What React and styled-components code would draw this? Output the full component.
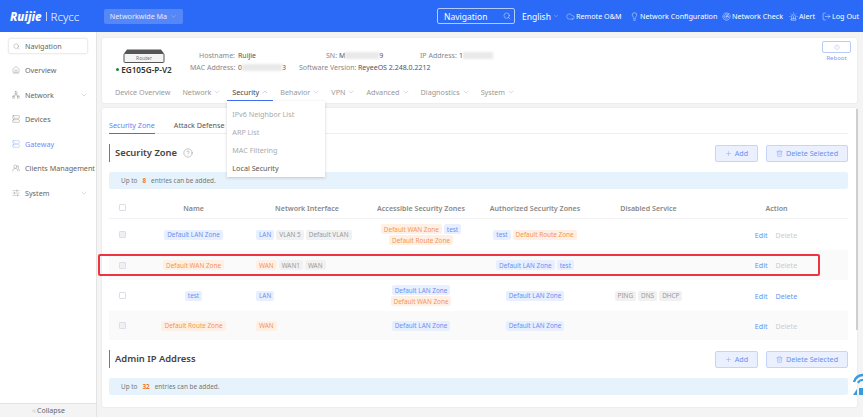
import React from "react";
import styled, { createGlobalStyle } from "styled-components";
import {
  Search, ChevronDown, ChevronUp, ChevronsLeft, Cloud, Lightbulb, Radar, Siren, LogOut,
  House, Network, Server, UsersRound, SlidersHorizontal, CircleHelp, Plus, Trash2, Power,
} from "lucide-react";

const GlobalStyle = createGlobalStyle`
  html, body { margin: 0; padding: 0; height: 100%; overflow: hidden; }
  body { font-family: "Noto Sans", "Open Sans", sans-serif; font-size: 7px; color: #666; background: #f4f4f5; }
  * { box-sizing: border-box; }
`;

const Page = styled.div`
  width: 863px;
  height: 417px;
  display: flex;
  flex-direction: column;
  overflow: hidden;
  position: relative;
`;

// Header
const Header = styled.header`
  height: 32px;
  flex: none;
  background: #2b6af6;
  color: #fff;
  display: flex;
  align-items: center;
  padding: 0 0 0 10px;
`;
const Logo = styled.div`
  width: 94px;
  display: flex;
  align-items: center;
  gap: 4px;
  font-size: 11.5px;
  b { font-style: italic; font-weight: 800; }
  i { width: 1px; height: 9px; background: #c8d8ff; }
  span { font-weight: 300; }
`;
const Selector = styled.div`
  width: 79px;
  height: 15px;
  display: flex;
  align-items: center;
  justify-content: center;
  gap: 3px;
  font-size: 7.2px;
  border-radius: 2px;
  background: rgba(255, 255, 255, 0.2);
  color: #e4ecff;
`;
const SearchBox = styled.div`
  margin-left: 254px;
  width: 78px;
  height: 16px;
  display: flex;
  align-items: center;
  justify-content: space-between;
  padding: 0 3px 0 6px;
  font-size: 8.5px;
  border: 1px solid #b4cbff;
  border-radius: 2px;
`;
const Lang = styled.div`
  width: 44px;
  margin-left: 7px;
  display: flex;
  align-items: center;
  gap: 2px;
  font-size: 8.5px;
`;
const HeadLink = styled.div`
  width: ${(p) => p.$w}px;
  flex: none;
  display: flex;
  align-items: center;
  gap: 1px;
  font-size: 7.2px;
  white-space: nowrap;
  svg { flex: none; }
`;

const Body = styled.div`
  flex: 1;
  display: flex;
  min-height: 0;
`;

// Sidebar
const Sidebar = styled.aside`
  width: 97px;
  flex: none;
  background: #fff;
  border-right: 1px solid #e4e4e4;
  display: flex;
  flex-direction: column;
  padding-top: 6px;
`;
const NavList = styled.nav`
  flex: 1;
  display: flex;
  flex-direction: column;
  padding: 0 8px;
`;
const NavItem = styled.div`
  height: ${(p) => (p.$boxed ? "16px" : "24.5px")};
  margin-bottom: ${(p) => (p.$boxed ? "4px" : "0")};
  display: flex;
  align-items: center;
  gap: 5px;
  padding-left: 4px;
  font-size: 7.2px;
  white-space: nowrap;
  color: ${(p) => (p.$active ? "#6d8ff5" : "#666")};
  border-radius: 2px;
  ${(p) => p.$boxed && "border: 1px solid #ececec; box-shadow: 0 0 2px rgba(0,0,0,.08);"}
  svg { flex: none; }
  svg:last-child:not(:first-child) { margin-left: auto; margin-right: 0; color: #999; }
`;
const CollapseBar = styled.div`
  height: 14px;
  display: flex;
  align-items: center;
  justify-content: center;
  background: #f4f4f5;
  border-top: 1px solid #e4e4e4;
  font-size: 7px;
`;

// Content
const Content = styled.main`
  flex: 1;
  padding: 6px 6px 10px 5px;
  display: flex;
  flex-direction: column;
  gap: 5px;
  min-width: 0;
`;
const DeviceCard = styled.section`
  height: 65px;
  flex: none;
  background: #fff;
  border-radius: 2px;
  box-shadow: 0 0 2px rgba(0, 0, 0, 0.1);
  position: relative;
  z-index: 2;
  display: flex;
  flex-direction: column;
`;
const DeviceTop = styled.div`
  flex: 1;
  display: flex;
`;
const DeviceBox = styled.div`
  width: 84px;
  padding-top: 11px;
  display: flex;
  flex-direction: column;
  align-items: center;
`;
const Model = styled.div`
  margin-top: 1px;
  display: flex;
  align-items: center;
  gap: 2px;
  font-size: 8.2px;
  font-weight: 600;
  color: #333;
  white-space: nowrap;
`;
const Dot = styled.span`
  width: 3px;
  height: 3px;
  border-radius: 50%;
  background: #0a8f3c;
`;
const InfoGrid = styled.div`
  margin-left: 4px;
  padding-top: 13px;
  display: flex;
  flex-direction: column;
  gap: 3px;
`;
const InfoRow = styled.div`
  display: flex;
  height: 9px;
  align-items: center;
`;
const Field = styled.div`
  width: ${(p) => p.$w}px;
  flex: none;
  display: flex;
  white-space: nowrap;
  font-size: 7px;
  span { width: ${(p) => p.$label}px; flex: none; text-align: right; color: #888; margin-right: 3px; }
  em { font-style: normal; color: #555; display: flex; align-items: center; }
`;
const Redact = styled.i`
  display: inline-block;
  width: ${(p) => p.$w}px;
  height: 7px;
  background: #e9e9e9;
  filter: blur(1px);
`;
const Reboot = styled.div`
  position: absolute;
  right: 6px;
  top: 3px;
  display: flex;
  flex-direction: column;
  align-items: center;
  font-size: 6px;
  color: #7d9bf0;
  div {
    width: 29px;
    height: 12px;
    border: 1px solid #b8caf7;
    border-radius: 2px;
    display: flex;
    align-items: center;
    justify-content: center;
    margin-bottom: 1px;
  }
`;
const DeviceTabs = styled.div`
  height: 20px;
  flex: none;
  display: flex;
  padding-left: 8px;
  gap: 2px;
`;
const DeviceTab = styled.div`
  position: relative;
  height: 18px;
  padding: 0 5px;
  display: flex;
  align-items: center;
  gap: 2px;
  font-size: 7.2px;
  white-space: nowrap;
  color: ${(p) => (p.$active ? "#444" : "#999")};
  border-bottom: 1px solid ${(p) => (p.$active ? "#3f73f5" : "transparent")};
  > svg { margin-right: -1px; }
`;
const Dropdown = styled.div`
  position: absolute;
  left: 0;
  top: 18px;
  width: 98px;
  height: 76px;
  padding: 4px 5px 0;
  background: #fff;
  box-shadow: 0 1px 3px rgba(0, 0, 0, 0.18);
  display: flex;
  flex-direction: column;
  z-index: 5;
`;
const DropItem = styled.div`
  height: 18px;
  flex: none;
  display: flex;
  align-items: center;
  color: ${(p) => (p.$on ? "#555" : "#aaa")};
  font-size: 7.2px;
`;

const MainCard = styled.section`
  flex: 1;
  width: 755px;
  background: #fff;
  border-radius: 2px;
  box-shadow: 0 0 2px rgba(0, 0, 0, 0.1);
  padding: 8px 9px 0 7px;
  display: flex;
  flex-direction: column;
  position: relative;
`;
const SubTabs = styled.div`
  height: 18px;
  flex: none;
  display: flex;
  gap: 19px;
  border-bottom: 1px solid #eceef4;
`;
const SubTab = styled.div`
  height: 18px;
  display: flex;
  align-items: center;
  font-size: 7.2px;
  color: ${(p) => (p.$active ? "#5d86f3" : "#555")};
  border-bottom: 1px solid ${(p) => (p.$active ? "#3f73f5" : "transparent")};
`;
const SectionHead = styled.div`
  height: 18px;
  flex: none;
  margin-top: ${(p) => p.$top}px;
  display: flex;
  align-items: center;
  gap: 6px;
  padding-left: 5px;
  border-left: 1.5px solid #4a78f0;
  font-size: 9.4px;
  line-height: 16px;
  font-weight: 600;
  color: #444;
  > svg { color: #777; }
`;
const HeadButtons = styled.div`
  margin-left: auto;
  display: flex;
  gap: 8px;
`;
const Button = styled.div`
  width: ${(p) => p.$w}px;
  height: 17px;
  display: flex;
  align-items: center;
  justify-content: center;
  gap: 3px;
  font-size: 7.2px;
  font-weight: 400;
  color: #6a8ff0;
  background: #eaf0fe;
  border: 1px solid #c5d5fa;
  border-radius: 2px;
`;
const Note = styled.div`
  height: 17px;
  flex: none;
  margin-top: 10px;
  padding-left: 12px;
  display: flex;
  align-items: center;
  gap: 4px;
  font-size: 6.4px;
  background: #e6f3fd;
  border-radius: 2px;
  color: #777;
  b { color: #ee7a26; padding: 0 1px; }
`;

// Table
const cols = "28px 113px 114px 114px 114px 113px 143px";
const Table = styled.div`
  margin-top: 8px;
  display: flex;
  flex-direction: column;
  flex: none;
`;
const HeadRow = styled.div`
  height: 22px;
  display: grid;
  grid-template-columns: ${cols};
  align-items: center;
  border-bottom: 1px solid #f2f2f4;
  font-size: 7.1px;
  font-weight: 600;
  color: #888;
`;
const Row = styled.div`
  height: ${(p) => p.$h}px;
  display: grid;
  grid-template-columns: ${cols};
  align-items: center;
  background: ${(p) => (p.$shade ? "#fafafa" : "#fff")};
`;
const Cell = styled.div`
  display: flex;
  flex-wrap: wrap;
  align-items: center;
  justify-content: ${(p) => (p.$left ? "flex-start" : "center")};
  gap: 1px 2px;
  padding-left: ${(p) => (p.$left ? "6px" : "0")};
`;
const Check = styled.span`
  width: 7px;
  height: 7px;
  margin-left: 10px;
  border-radius: 1px;
  border: 1px solid #dcdfe6;
  background: ${(p) => (p.$off ? "#eef0f6" : "#fff")};
`;
const tagColors = {
  blue: "background:#e8efff;color:#6a90f2;",
  orange: "background:#fff0e6;color:#f39455;",
  gray: "background:#f1f1f2;color:#999;",
};
const Tag = styled.span`
  height: 10px;
  padding: 0 3px;
  display: inline-flex;
  align-items: center;
  border-radius: 2px;
  font-size: 6.4px;
  white-space: nowrap;
  ${(p) => tagColors[p.$kind]}
`;
const ActionLink = styled.span`
  font-size: 7.1px;
  color: ${(p) => (p.$off ? "#ccc" : "#6a90f2")};
`;
const Actions = styled(Cell)`
  gap: 8px;
  padding-right: 1px;
`;

const Highlight = styled.div`
  position: absolute;
  left: -4px;
  top: 146px;
  width: 722px;
  height: 22px;
  border: 2px solid #ee3440;
  border-radius: 2px;
  pointer-events: none;
`;
const Thumb = styled.div`
  position: absolute;
  right: -1px;
  top: 1px;
  width: 2px;
  height: 221px;
  background: #cfcfcf;
`;
const WifiFloat = styled.div`
  position: absolute;
  left: 853px;
  top: 371px;
`;

const tabs = [
  ["Device Overview", false],
  ["Network", true],
  ["Security", true, true],
  ["Behavior", true],
  ["VPN", true],
  ["Advanced", true],
  ["Diagnostics", true],
  ["System", true],
];

const navs = [
  ["Overview", House],
  ["Network", Network, true],
  ["Devices", Server],
  ["Gateway", Server, false, true],
  ["Clients Management", UsersRound],
  ["System", SlidersHorizontal, true],
];

const rows = [
  {
    h: 31, off: true, name: ["Default LAN Zone", "blue"],
    ifs: [["LAN", "blue"], ["VLAN 5", "gray"], ["Default VLAN", "gray"]],
    acc: [["Default WAN Zone", "orange"], ["test", "blue"], ["Default Route Zone", "orange"]],
    auth: [["test", "blue"], ["Default Route Zone", "orange"]],
    dis: [],
  },
  {
    h: 30, shade: true, off: true, name: ["Default WAN Zone", "orange"],
    ifs: [["WAN", "orange"], ["WAN1", "gray"], ["WAN", "gray"]],
    acc: [],
    auth: [["Default LAN Zone", "blue"], ["test", "blue"]],
    dis: [],
  },
  {
    h: 31, name: ["test", "blue"],
    ifs: [["LAN", "blue"]],
    acc: [["Default LAN Zone", "blue"], ["Default WAN Zone", "orange"]],
    auth: [["Default LAN Zone", "blue"]],
    dis: [["PING", "gray"], ["DNS", "gray"], ["DHCP", "gray"]],
  },
  {
    h: 29, shade: true, off: true, name: ["Default Route Zone", "orange"],
    ifs: [["WAN", "orange"]],
    acc: [["Default LAN Zone", "blue"]],
    auth: [["Default LAN Zone", "blue"]],
    dis: [],
  },
];

const tagsOf = (list) =>
  list.map(([text, kind], i) => (
    <Tag key={i} $kind={kind}>{text}</Tag>
  ));

const RouterIcon = () => (
  <svg width="42" height="14" viewBox="0 0 42 14">
    <path d="M4 0.5h34l3 4H1z" fill="#555" />
    <rect x="1" y="4.5" width="40" height="9" rx="1" fill="#f4f4f4" stroke="#555" />
    <text x="21" y="11.3" fontSize="5" textAnchor="middle" fill="#777" fontFamily="Noto Sans">Router</text>
  </svg>
);

const WifiIcon = () => (
  <svg width="10" height="25" viewBox="0 0 10 25">
    <path d="M1 11a10 10 0 0 1 9-7" fill="none" stroke="#3a9bdc" strokeWidth="2.4" />
    <path d="M5 12a5 5 0 0 1 5-3" fill="none" stroke="#3a9bdc" strokeWidth="2" />
    <path d="M0 24l4-6v6zM6 17h4v7H6z" fill="#3a9bdc" />
  </svg>
);

const NoteLine = ({ count }) => (
  <Note>Up to <b>{count}</b> entries can be added.</Note>
);

const Section = ({ title, top, help }) => (
  <SectionHead $top={top}>
    {title}
    {help && <CircleHelp size={10} strokeWidth={1} />}
    <HeadButtons>
      <Button $w={43}><Plus size={7} strokeWidth={1.2} />Add</Button>
      <Button $w={82}><Trash2 size={7} strokeWidth={1.2} />Delete Selected</Button>
    </HeadButtons>
  </SectionHead>
);

export default function App() {
  return (
    <Page>
      <GlobalStyle />
      <Header>
        <Logo><b>Ruijie</b><i /><span>Rcycc</span></Logo>
        <Selector>Networkwide Ma <ChevronDown size={7} strokeWidth={1} /></Selector>
        <SearchBox>Navigation <Search size={8} strokeWidth={1.2} /></SearchBox>
        <Lang>English <ChevronDown size={6} strokeWidth={1.2} /></Lang>
        <HeadLink $w={64}><Cloud size={9} strokeWidth={1} />Remote O&amp;M</HeadLink>
        <HeadLink $w={92}><Lightbulb size={9} strokeWidth={1.2} />Network Configuration</HeadLink>
        <HeadLink $w={67}><Radar size={9} strokeWidth={1.2} />Network Check</HeadLink>
        <HeadLink $w={33}><Siren size={9} strokeWidth={1.2} />Alert</HeadLink>
        <HeadLink $w={38}><LogOut size={9} strokeWidth={1.2} />Log Out</HeadLink>
      </Header>
      <Body>
        <Sidebar>
          <NavList>
            <NavItem $boxed><Search size={7} strokeWidth={1} />Navigation</NavItem>
            {navs.map(([label, Icon, more, active]) => (
              <NavItem key={label} $active={active}>
                <Icon size={8} strokeWidth={1} />
                {label}
                {more && <ChevronDown size={8} strokeWidth={1} />}
              </NavItem>
            ))}
          </NavList>
          <CollapseBar><ChevronsLeft size={6} strokeWidth={1} />Collapse</CollapseBar>
        </Sidebar>
        <Content>
          <DeviceCard>
            <DeviceTop>
              <DeviceBox>
                <RouterIcon />
                <Model><Dot />EG105G-P-V2</Model>
              </DeviceBox>
              <InfoGrid>
                <InfoRow>
                  <Field $w={136} $label={45}><span>Hostname:</span><em>Ruijie</em></Field>
                  <Field $w={94} $label={10}><span>SN:</span><em>M<Redact $w={34} />9</em></Field>
                  <Field $w={80} $label={36}><span>IP Address:</span><em>1<Redact $w={30} /></em></Field>
                </InfoRow>
                <InfoRow>
                  <Field $w={109} $label={45}><span>MAC Address:</span><em>0<Redact $w={40} />3</em></Field>
                  <Field $w={160} $label={56}><span>Software Version:</span><em>ReyeeOS 2.248.0.2212</em></Field>
                </InfoRow>
              </InfoGrid>
            </DeviceTop>
            <Reboot><div><Power size={6} strokeWidth={1.4} /></div>Reboot</Reboot>
            <DeviceTabs>
              {tabs.map(([label, more, active]) => (
                <DeviceTab key={label} $active={active}>
                  {label}
                  {more && (active
                    ? <ChevronUp size={8} strokeWidth={1} color="#777" />
                    : <ChevronDown size={8} strokeWidth={1} color="#999" />)}
                  {active && (
                    <Dropdown>
                      <DropItem>IPv6 Neighbor List</DropItem>
                      <DropItem>ARP List</DropItem>
                      <DropItem>MAC Filtering</DropItem>
                      <DropItem $on>Local Security</DropItem>
                    </Dropdown>
                  )}
                </DeviceTab>
              ))}
            </DeviceTabs>
          </DeviceCard>
          <MainCard>
            <SubTabs>
              <SubTab $active>Security Zone</SubTab>
              <SubTab>Attack Defense</SubTab>
            </SubTabs>
            <Section title="Security Zone" top={10} help />
            <NoteLine count={8} />
            <Table>
              <HeadRow>
                <Check />
                <Cell>Name</Cell>
                <Cell>Network Interface</Cell>
                <Cell>Accessible Security Zones</Cell>
                <Cell>Authorized Security Zones</Cell>
                <Cell>Disabled Service</Cell>
                <Cell>Action</Cell>
              </HeadRow>
              {rows.map((r, i) => (
                <Row key={i} $h={r.h} $shade={r.shade}>
                  <Check $off={r.off} />
                  <Cell>{tagsOf([r.name])}</Cell>
                  <Cell $left>{tagsOf(r.ifs)}</Cell>
                  <Cell>{tagsOf(r.acc)}</Cell>
                  <Cell>{tagsOf(r.auth)}</Cell>
                  <Cell>{tagsOf(r.dis)}</Cell>
                  <Actions>
                    <ActionLink>Edit</ActionLink>
                    <ActionLink $off={r.off}>Delete</ActionLink>
                  </Actions>
                </Row>
              ))}
            </Table>
            <Section title="Admin IP Address" top={10} />
            <NoteLine count={32} />
            <Highlight />
            <Thumb />
          </MainCard>
        </Content>
      </Body>
      <WifiFloat><WifiIcon /></WifiFloat>
    </Page>
  );
}
